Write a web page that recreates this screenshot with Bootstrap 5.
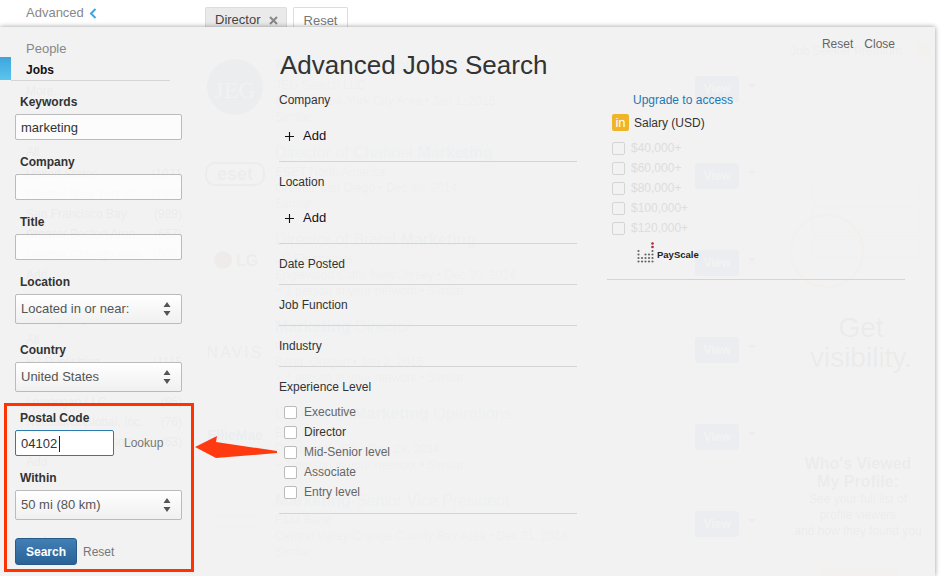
<!DOCTYPE html>
<html lang="en"><head><meta charset="utf-8"><title>Advanced Jobs Search</title>
<link href="https://cdn.jsdelivr.net/npm/bootstrap@5.3.0/dist/css/bootstrap.min.css" rel="stylesheet">
<style>
html,body{height:576px;overflow:hidden}
body{font:12px/14px "Liberation Sans",Arial,sans-serif;color:#333;background:#fff;position:relative}
/* page behind the panel */
.basepage{width:941px;height:576px;overflow:hidden}
.sidecol{width:205px;flex:none;padding-left:26px}
.advlink{color:#888;line-height:26px;font-size:13px;display:flex;align-items:center;gap:5px}
.ghostlist{height:20px;line-height:20px;font-size:12px;color:#222;display:flex;justify-content:space-between;padding-right:23px}
.gap-more{margin-top:55px}.gap-all{margin-top:41px}.gap-2px{margin-top:2px}.gap-1px{margin-top:1px}.gap-co{margin-top:22px}.gap-3px{margin-top:3px}.gap-sal{margin-top:60px}
.ghosthead{font-weight:700;font-size:14px}
.maincol{width:570px;flex:none}
.tagrow{height:27px;padding-top:7px;margin-bottom:29px;align-items:flex-start}
.tagchip{height:20px;line-height:14px;padding:6px 0 0 9px;border:1px solid #ddd;border-bottom:0;border-radius:2px 2px 0 0;font-size:13px}
.chip-on{width:82px;background:#eaeaea;color:#444;margin-right:6px;white-space:nowrap;display:flex;align-items:center;gap:8px;padding-top:5px}
.chip-off{width:55px;color:#777;text-align:center;padding-left:0}
.jobrow{height:87px}
.joblogo{width:60px;margin-right:10px;flex:none;text-align:center}
.jobbody{width:420px;flex:none;font-size:12px;line-height:16px;color:#888}
.jobtitle{font-size:16px;line-height:20px;color:#5a9ccc;margin-bottom:1px}
.jobview{margin-top:20px;width:44px;height:26px;line-height:26px;background:#1f6fb5;border-radius:3px;color:#fff;font-weight:700;font-size:12px;text-align:center}
.jobcaret{margin:28px 0 0 9px;width:0;height:0;border:4px solid transparent;border-top-color:#666}
.adcol{width:160px;flex:none;text-align:center;color:#222}
.premium{margin-top:43px;padding-left:15px;font-size:12px;line-height:16px;color:#666;display:flex;gap:15px;white-space:nowrap}
.premium i{display:block;width:14px;height:14px;background:#f0d070;border-radius:2px;flex:none}
.adart{display:block;margin:121px 0 0 16px}
.adhead{font-size:28px;line-height:30px;margin-top:13px;padding-left:12px}
.adsub{margin-top:82px;font-size:16px;line-height:18px;font-weight:700;color:#333;padding-left:6px}
.adtxt{font-size:12px;line-height:16px;font-weight:400;color:#333}
.adbtn{margin:29px 0 0 46px;width:77px;height:8px;background:#e8e0a0}
/* panel */
.panelshade{position:absolute;left:0;top:27px;width:935px;height:549px;background:rgba(242,242,242,.97);box-shadow:0 0 5px rgba(0,0,0,.4)}
.formcol{width:279px;flex:none}
.navpeople{margin-top:14px;padding-left:26px;height:16px;line-height:16px;color:#888;font-size:13px}
.navtab{width:11px;height:23px;background:linear-gradient(#3da5dc,#5cc4ee)}
.navjobs{width:159px;padding:5px 0 2px 15px;border-bottom:1px solid #d5d5d5;line-height:16px;font-weight:700;color:#111}
.formbox{width:182px;padding-left:15px}
.fieldlabel{display:block;margin:15px 0 5px 5px;line-height:14px;font-weight:700;color:#333}
.label-first{margin-top:14px}
.gap-wide{margin-top:19px}
.plaininput{display:block;width:100%;height:26px;padding:0 5px;border:1px solid #bbb;border-radius:2px;background:rgba(255,255,255,.72);font:13px "Liberation Sans",Arial,sans-serif;color:#333;outline:0}
.form-select.choosebox{height:30px;padding:0 20px 0 5px;border:1px solid #bbb;border-radius:2px;font-size:13px;line-height:28px;color:#555;
background-color:transparent;background-image:url("data:image/svg+xml,%3Csvg xmlns='http://www.w3.org/2000/svg' width='8' height='14'%3E%3Cpath d='M4 0l3.500 5H.5zM4 14L.5 9h7z' fill='%23555'/%3E%3C/svg%3E"),linear-gradient(#fff,#f0f0f0);background-repeat:no-repeat;background-position:right 10px center,0 0;background-size:8px 14px,100% 100%}
.postalinput{width:99px;flex:none;border-color:#2a7bb0;background:#fff linear-gradient(#222,#222) 43px 5px/1px 16px no-repeat}
.lookuplink{margin-left:10px;color:#777}
.searchbtn.btn{width:62px;height:27px;padding:1px 0 0;border:1px solid #265a88;border-radius:3px;background:linear-gradient(#417fb6,#2a6396);color:#fff;font-size:12px;line-height:24px;font-weight:700}
.resetlink{margin-left:6px;color:#777}
.row-actions{margin-top:18px}
.midcol{width:298px;flex:none}
.pagehead{margin:23px 0 0;font-size:26px;line-height:30px;font-weight:400;color:#333;padding-left:1px}
.facet{border-bottom:1px solid #d5d5d5;padding-top:13px;padding-bottom:13px}
.facetname{line-height:14px;color:#333;font-size:12px}
.addrow{margin-top:21px;margin-bottom:4px;padding-left:6px;height:16px;line-height:16px;font-size:13px;color:#111;display:flex;align-items:center;gap:9px}
.addrow svg{flex:none}
.levels{margin-top:8px;margin-bottom:-2px}
.checkline{height:20px;display:flex;align-items:center;padding-left:5px;color:#666}
.checkline .form-check-input{width:13px;height:13px;margin:0 7px 0 0;border:1px solid #bbb;border-radius:2px;background-color:#fff;flex:none}
.checkline.isdark{color:#333}
.sidecol-r{width:298px;margin-left:30px;flex:none}
.panelactions{margin-top:10px;padding-right:10px;gap:11px;color:#666;line-height:14px;font-size:12px}
.upgradelink{margin:42px 0 0 26px;color:#1f78b4;line-height:14px}
.salaryhead{margin:7px 0 7px 5px;height:17px;display:flex;align-items:center;gap:5px;color:#333}
.inbadge{width:17px;height:17px;background:#f0b429;border-radius:2px;color:#fff;text-align:center;font-size:13px;line-height:17px}
.paylist{padding-left:5px}
.paylist .checkline{padding-left:0;color:#ddd}
.paylist .checkline .form-check-input{margin-right:6px;background-color:transparent;border-color:#d5d5d5}
.payrow{margin:4px 0 0 30px;height:37px;display:flex;align-items:flex-start;gap:2px;font:700 9.500px/25px "Liberation Sans",Arial,sans-serif;color:#222}
.rightrule{border-bottom:1px solid #d5d5d5}
/* annotation */
.calloutbox{position:absolute;left:4px;top:403px;width:190px;height:169px;border:3px solid #f30}
.calloutarrow{position:absolute;left:190px;top:430px}
</style></head>
<body>
<div class="basepage d-flex">
  <div class="sidecol">
    <div class="advlink">Advanced
      <svg width="8" height="11" viewBox="0 0 8 11"><path d="M6.500 1L2 5.500 6.500 10" fill="none" stroke="#3fa3dc" stroke-width="2"/></svg></div>
    <div class="ghostlist gap-more"><span>More...</span></div>
    <div class="ghostlist gap-all"><span>All</span></div>
    <div class="ghostlist gap-2px"><span>United States</span><span>(1071</span></div>
    <div class="ghostlist"><span>Greater New York Ci...</span><span>(1604</span></div>
    <div class="ghostlist"><span>San Francisco Bay Area</span><span>(989)</span></div>
    <div class="ghostlist"><span>Greater Boston Area</span><span>(657)</span></div>
    <div class="ghostlist"><span>Greater Chicago Area</span><span>(603)</span></div>
    <div class="ghostlist gap-1px"><span>Add</span></div>
    <div class="ghostlist ghosthead gap-co"><span>Company</span></div>
    <div class="ghostlist gap-3px"><span>All</span></div>
    <div class="ghostlist gap-2px"><span>H2 Publishing</span><span>(1115</span></div>
    <div class="ghostlist"><span>Brookdale</span><span>(254)</span></div>
    <div class="ghostlist"><span>Lowongan LLC</span><span>(95)</span></div>
    <div class="ghostlist"><span>NetSourceGlobal, Inc.</span><span>(76)</span></div>
    <div class="ghostlist"><span>Johnson &amp; Johnson</span><span>(63)</span></div>
    <div class="ghostlist"><span>Add</span></div>
    <div class="ghostlist ghosthead gap-sal"><span>Salary</span></div>
  </div>
  <div class="maincol">
    <div class="d-flex tagrow">
      <div class="tagchip chip-on">Director<svg width="9" height="9" viewBox="0 0 9 9"><path d="M1 1l7 7M8 1L1 8" stroke="#888" stroke-width="2"/></svg></div>
      <div class="tagchip chip-off">Reset</div>
    </div>
    <div class="d-flex jobrow"><div class="joblogo"><svg width="58" height="60" viewBox="0 0 58 60"><circle cx="29" cy="31" r="28" fill="#2b5f8f"/><text x="29" y="42" text-anchor="middle" font-family="Liberation Serif" font-size="24" fill="#fff">JEG</text></svg></div>
      <div class="jobbody"><div class="jobtitle"><b>Marketing</b> Director</div>JEG Search LLC<br>Greater New York City Area • Jan 1, 2015<br>Similar</div><div class="jobview">View</div><div class="jobcaret"></div></div>
    <div class="d-flex jobrow"><div class="joblogo"><svg width="60" height="44" viewBox="0 0 60 44"><rect x="1" y="20" width="58" height="22" rx="9" fill="none" stroke="#444" stroke-width="2"/><text x="30" y="37" text-anchor="middle" font-family="Liberation Sans" font-weight="700" font-size="18" fill="#444">eset</text></svg></div>
      <div class="jobbody"><div class="jobtitle">Director of Channel <b>Marketing</b></div>ESET North America<br>Greater San Diego • Dec 30, 2014<br>Similar</div><div class="jobview">View</div><div class="jobcaret"></div></div>
    <div class="d-flex jobrow"><div class="joblogo"><svg width="60" height="60" viewBox="0 0 60 60"><circle cx="18" cy="30" r="9" fill="#a33"/><text x="42" y="36" text-anchor="middle" font-family="Liberation Sans" font-weight="700" font-size="16" fill="#444">LG</text></svg></div>
      <div class="jobbody"><div class="jobtitle">Director of Brand <b>Marketing</b></div>LG Electronics<br>Englewood Cliffs, New Jersey • Dec 30, 2014<br>+ 1 person in your network • Similar</div><div class="jobview">View</div><div class="jobcaret"></div></div>
    <div class="d-flex jobrow"><div class="joblogo"><svg width="60" height="60" viewBox="0 0 60 60"><text x="30" y="41" text-anchor="middle" font-family="Liberation Sans" font-size="16" letter-spacing="2" fill="#444">NAVIS</text></svg></div>
      <div class="jobbody"><div class="jobtitle"><b>Marketing</b> Director</div>Navis<br>Bend, Oregon • Jan 2, 2015<br>+ 1 person in your network • Similar</div><div class="jobview">View</div><div class="jobcaret"></div></div>
    <div class="d-flex jobrow"><div class="joblogo"><svg width="60" height="60" viewBox="0 0 60 60"><text x="30" y="36" text-anchor="middle" font-family="Liberation Sans" font-size="14" font-weight="700" fill="#1f6fb5">EllieMae</text></svg></div>
      <div class="jobbody"><div class="jobtitle">Director of <b>Marketing</b> Operations</div>Ellie Mae<br>Pleasanton, CA • Dec 29, 2014<br>+ 1 person in your network • Similar</div><div class="jobview">View</div><div class="jobcaret"></div></div>
    <div class="d-flex jobrow"><div class="joblogo"><svg width="60" height="60" viewBox="0 0 60 60"><rect y="4" width="60" height="54" fill="#fff" stroke="#ccc"/><path d="M8 25h44M8 35h44" stroke="#999"/></svg></div>
      <div class="jobbody"><div class="jobtitle"><b>Marketing</b>-Senior Vice President</div>F&amp;M Bank<br>Central Valley Orange County Bay Area • Dec 31, 2014<br>Similar</div><div class="jobview">View</div><div class="jobcaret"></div></div>
  </div>
  <div class="adcol">
    <div class="premium">Job Seeker Premium<i></i></div>
    <svg class="adart" width="130" height="120" viewBox="0 0 130 120"><g fill="none" stroke="#aaa"><rect x="22" y="0" width="106" height="25"/><rect x="22" y="28" width="106" height="24"/><rect x="22" y="56" width="106" height="22"/></g><circle cx="36" cy="71" r="36" fill="none" stroke="#e8a040" stroke-width="2"/></svg>
    <div class="adhead">Get<br>visibility.</div>
    <div class="adsub">Who's Viewed<br>My Profile:<div class="adtxt">See your full list of<br>profile viewers<br>and how they found you</div></div>
    <div class="adbtn"></div>
  </div>
</div>

<div class="panelshade d-flex">
  <div class="formcol">
    <div class="navpeople">People</div>
    <div class="d-flex"><div class="navtab"></div><div class="navjobs">Jobs</div></div>
    <form class="formbox">
      <label class="fieldlabel label-first" for="kw">Keywords</label><input class="plaininput" id="kw" value="marketing">
      <label class="fieldlabel" for="co">Company</label><input class="plaininput" id="co">
      <label class="fieldlabel" for="ti">Title</label><input class="plaininput" id="ti">
      <label class="fieldlabel" for="lo">Location</label><select class="form-select choosebox" id="lo"><option>Located in or near:</option></select>
      <label class="fieldlabel gap-wide" for="cn">Country</label><select class="form-select choosebox" id="cn"><option>United States</option></select>
      <label class="fieldlabel gap-wide" for="pc">Postal Code</label>
      <div class="d-flex align-items-center"><input class="plaininput postalinput" id="pc" value="04102"><span class="lookuplink">Lookup</span></div>
      <label class="fieldlabel" for="wi">Within</label><select class="form-select choosebox" id="wi"><option>50 mi (80 km)</option></select>
      <div class="d-flex align-items-center row-actions"><button type="button" class="btn searchbtn">Search</button><span class="resetlink">Reset</span></div>
    </form>
  </div>
  <div class="midcol">
    <h1 class="pagehead">Advanced Jobs Search</h1>
    <div class="facet"><div class="facetname">Company</div><div class="addrow"><svg width="9" height="9" viewBox="0 0 9 9"><path d="M4.500 0v9M0 4.500h9" stroke="#111" stroke-width="1.100"/></svg>Add</div></div>
    <div class="facet"><div class="facetname">Location</div><div class="addrow"><svg width="9" height="9" viewBox="0 0 9 9"><path d="M4.500 0v9M0 4.500h9" stroke="#111" stroke-width="1.100"/></svg>Add</div></div>
    <div class="facet"><div class="facetname">Date Posted</div></div>
    <div class="facet"><div class="facetname">Job Function</div></div>
    <div class="facet"><div class="facetname">Industry</div></div>
    <div class="facet"><div class="facetname">Experience Level</div>
      <div class="levels">
        <div class="checkline"><input type="checkbox" class="form-check-input">Executive</div>
        <div class="checkline isdark"><input type="checkbox" class="form-check-input">Director</div>
        <div class="checkline"><input type="checkbox" class="form-check-input">Mid-Senior level</div>
        <div class="checkline"><input type="checkbox" class="form-check-input">Associate</div>
        <div class="checkline"><input type="checkbox" class="form-check-input">Entry level</div>
      </div>
    </div>
  </div>
  <div class="sidecol-r">
    <div class="d-flex justify-content-end panelactions"><span>Reset</span><span>Close</span></div>
    <div class="upgradelink">Upgrade to access</div>
    <div class="salaryhead"><span class="inbadge">in</span>Salary (USD)</div>
    <div class="paylist">
      <div class="checkline"><input type="checkbox" class="form-check-input">$40,000+</div>
      <div class="checkline"><input type="checkbox" class="form-check-input">$60,000+</div>
      <div class="checkline"><input type="checkbox" class="form-check-input">$80,000+</div>
      <div class="checkline"><input type="checkbox" class="form-check-input">$100,000+</div>
      <div class="checkline"><input type="checkbox" class="form-check-input">$120,000+</div>
    </div>
    <div class="payrow">
      <svg width="18" height="21" viewBox="0 0 18 21"><g fill="#666"><circle cx="1.500" cy="9" r="1.100"/><circle cx="1.500" cy="12.500" r="1.100"/><circle cx="1.500" cy="16" r="1.100"/><circle cx="1.500" cy="19.500" r="1.100"/><circle cx="5" cy="16" r="1.100"/><circle cx="5" cy="19.500" r="1.100"/><circle cx="8.500" cy="12.500" r="1.100"/><circle cx="8.500" cy="16" r="1.100"/><circle cx="8.500" cy="19.500" r="1.100"/><circle cx="12" cy="12.500" r="1.100"/><circle cx="12" cy="16" r="1.100"/><circle cx="12" cy="19.500" r="1.100"/><circle cx="15.500" cy="9" r="1.100"/><circle cx="15.500" cy="12.500" r="1.100"/><circle cx="15.500" cy="16" r="1.100"/><circle cx="15.500" cy="19.500" r="1.100"/></g><g fill="#b0263a"><circle cx="15.500" cy="1.500" r="1.300"/><circle cx="15.500" cy="5" r="1.300"/></g></svg>
      <span>PayScale</span>
    </div>
    <div class="rightrule"></div>
  </div>
</div>

<div class="calloutbox"></div>
<svg class="calloutarrow" width="90" height="34" viewBox="190 430 90 34"><path d="M195 447L217 436 216 442 277 451 277 453 216 458Z" fill="#ff3a10"/></svg>
<script src="https://cdn.jsdelivr.net/npm/bootstrap@5.3.0/dist/js/bootstrap.bundle.min.js"></script>
</body></html>
